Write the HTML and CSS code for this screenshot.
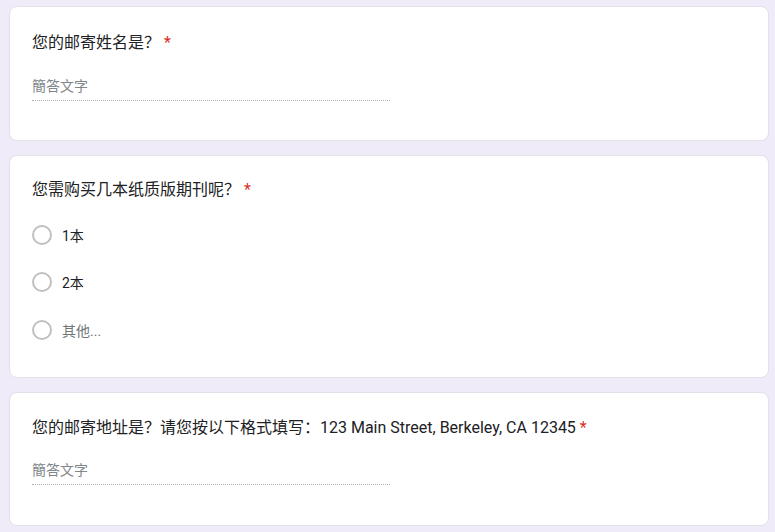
FILE: index.html
```html
<!DOCTYPE html>
<html lang="zh-CN">
<head>
<meta charset="utf-8">
<title>Form</title>
<link rel="stylesheet" href="styles.css">
</head>
<body>
<main class="page">
  <section class="card card-name">
    <div class="title">您的邮寄姓名是？ <span class="req">*</span></div>
    <div class="input"><span class="placeholder">簡答文字</span></div>
  </section>
  <section class="card card-qty">
    <div class="title">您需购买几本纸质版期刊呢？ <span class="req">*</span></div>
    <div class="options">
      <div class="option"><span class="radio"></span><span class="label">1本</span></div>
      <div class="option"><span class="radio"></span><span class="label">2本</span></div>
      <div class="option"><span class="radio"></span><span class="label other">其他...</span></div>
    </div>
  </section>
  <section class="card card-addr">
    <div class="title">您的邮寄地址是？请您按以下格式填写：123 Main Street, Berkeley, CA 12345 <span class="req">*</span></div>
    <div class="input"><span class="placeholder">簡答文字</span></div>
  </section>
</main>
</body>
</html>
```

FILE: styles.css
```css
html, body {
  margin: 0;
  padding: 0;
  background: #f0ebf8;
}
body {
  font-family: Roboto, "Noto Sans CJK SC", sans-serif;
  color: #202124;
}
.page {
  display: flex;
  flex-direction: column;
  gap: 14px;
  padding: 6px 6px 0 9px;
}
.card {
  background: #fff;
  border: 1px solid #e3e0ea;
  border-radius: 8px;
  padding: 24px 23px 0 22px;
  box-sizing: border-box;
}
.card-name { height: 135px; }
.card-qty { height: 223px; padding-top: 22px; }
.card-addr { height: 134px; padding-top: 23px; }
.title {
  font-size: 16px;
  line-height: 24px;
}
.req {
  color: #d93025;
}
.input {
  width: 358px;
  margin-top: 19px;
  border-bottom: 1px dotted #b0b0b0;
  height: 26px;
  box-sizing: content-box;
}
.card-addr .input { margin-top: 18px; }
.placeholder {
  display: block;
  font-size: 14px;
  color: #80868b;
  line-height: 24px;
}
.options {
  margin-top: 9px;
  display: flex;
  flex-direction: column;
}
.option {
  display: flex;
  align-items: center;
  height: 47.5px;
}
.radio {
  width: 20px;
  height: 20px;
  border: 2px solid #c0c0c0;
  border-radius: 50%;
  box-sizing: border-box;
  margin-right: 10px;
}
.label {
  font-size: 14px;
  color: #202124;
}
.label.other { color: #70757a; }
```
